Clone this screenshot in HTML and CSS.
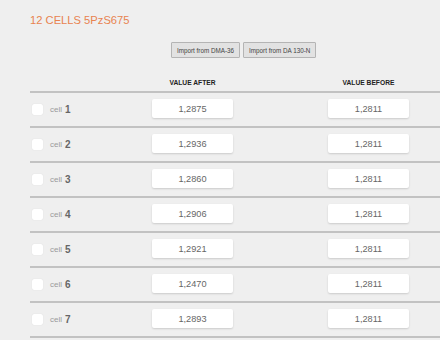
FILE: index.html
```html
<!DOCTYPE html>
<html lang="en">
<head>
    <meta charset="UTF-8">
    <title>12 CELLS 5PzS675</title>
    <link rel="stylesheet" href="styles.css">
</head>
<body>
    <div class="page">
        <h1 class="title">12 CELLS 5PzS675</h1>

        <div class="imports">
            <button type="button">Import from DMA-36</button>
            <button type="button">Import from DA 130-N</button>
        </div>

        <div class="grid head">
            <span></span>
            <span class="col-title">VALUE AFTER</span>
            <span></span>
            <span class="col-title">VALUE BEFORE</span>
        </div>

        <div class="grid row">
            <label class="cell"><input type="checkbox"> cell <b>1</b></label>
            <input class="value" type="text" value="1,2875" readonly>
            <span></span>
            <input class="value" type="text" value="1,2811" readonly>
        </div>
        <div class="grid row">
            <label class="cell"><input type="checkbox"> cell <b>2</b></label>
            <input class="value" type="text" value="1,2936" readonly>
            <span></span>
            <input class="value" type="text" value="1,2811" readonly>
        </div>
        <div class="grid row">
            <label class="cell"><input type="checkbox"> cell <b>3</b></label>
            <input class="value" type="text" value="1,2860" readonly>
            <span></span>
            <input class="value" type="text" value="1,2811" readonly>
        </div>
        <div class="grid row">
            <label class="cell"><input type="checkbox"> cell <b>4</b></label>
            <input class="value" type="text" value="1,2906" readonly>
            <span></span>
            <input class="value" type="text" value="1,2811" readonly>
        </div>
        <div class="grid row">
            <label class="cell"><input type="checkbox"> cell <b>5</b></label>
            <input class="value" type="text" value="1,2921" readonly>
            <span></span>
            <input class="value" type="text" value="1,2811" readonly>
        </div>
        <div class="grid row">
            <label class="cell"><input type="checkbox"> cell <b>6</b></label>
            <input class="value" type="text" value="1,2470" readonly>
            <span></span>
            <input class="value" type="text" value="1,2811" readonly>
        </div>
        <div class="grid row">
            <label class="cell"><input type="checkbox"> cell <b>7</b></label>
            <input class="value" type="text" value="1,2893" readonly>
            <span></span>
            <input class="value" type="text" value="1,2811" readonly>
        </div>
        <div class="grid row end"></div>
    </div>
</body>
</html>
```

FILE: styles.css
```css
body {
    margin: 0;
    background-color: #efefef;
    font-family: "Liberation Sans", Arial, sans-serif;
}
.page {
    padding-left: 30px;
}
.title {
    margin: 0;
    padding-top: 14px;
    font-size: 11.2px;
    line-height: 13px;
    font-weight: normal;
    color: #e8834f;
}
.imports {
    display: flex;
    gap: 3px;
    margin-top: 15px;
    padding-left: 141px;
}
.imports button {
    height: 16px;
    padding: 0 5px;
    border: 1px solid #b4b4b4;
    border-radius: 1px;
    background-color: #e2e2e2;
    color: #444;
    font-family: inherit;
    font-size: 6.3px;
}
.grid {
    display: grid;
    grid-template-columns: 122px 81px 95px 81px;
    align-items: center;
}
.head {
    margin-top: 20px;
    padding-bottom: 4px;
    line-height: 9px;
}
.col-title {
    text-align: center;
    font-size: 6.7px;
    font-weight: bold;
    color: #222;
}
.row {
    height: 33px;
    border-top: 2px solid #c2c2c2;
}
.row.end {
    height: 10px;
}
.cell {
    display: flex;
    align-items: center;
    gap: 0;
    font-size: 8px;
    color: #9a9a9a;
}
.cell input {
    appearance: none;
    width: 11px;
    height: 11px;
    margin: 0 7px 0 2px;
    border-radius: 2px;
    background-color: white;
    box-shadow: 0 0 1px rgba(0,0,0,0.15);
}
.cell b {
    margin-left: 3px;
    font-size: 10px;
    color: #666;
}
.value {
    box-sizing: border-box;
    width: 81px;
    height: 19px;
    margin-top: -2px;
    padding: 0;
    border: none;
    border-radius: 2px;
    background-color: white;
    box-shadow: 0 1px 2px rgba(0,0,0,0.15);
    text-align: center;
    font-family: inherit;
    font-size: 9.2px;
    color: #666;
}
```
